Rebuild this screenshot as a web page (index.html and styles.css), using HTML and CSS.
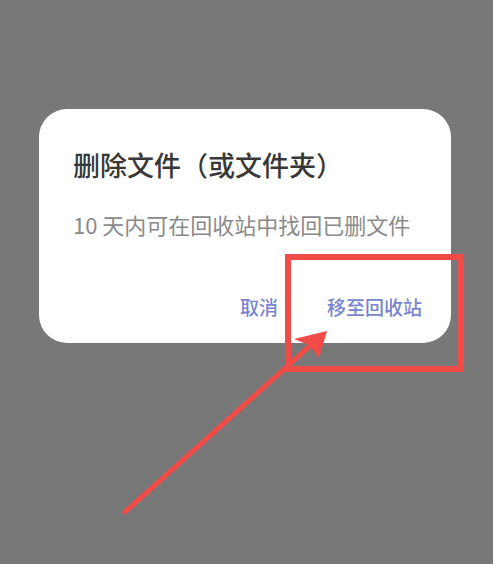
FILE: index.html
```html
<!DOCTYPE html>
<html lang="zh">
<head>
<meta charset="utf-8">
<title>删除文件</title>
<link rel="stylesheet" href="styles.css">
</head>
<body>
<div class="screen">
  <div class="dialog">
    <div class="title">删除文件（或文件夹）</div>
    <div class="message">10 天内可在回收站中找回已删文件</div>
    <div class="actions">
      <span class="btn">取消</span>
      <span class="btn">移至回收站</span>
    </div>
  </div>
  <svg class="annotation" width="493" height="564" viewBox="0 0 493 564">
    <rect x="288" y="257" width="173" height="112" fill="none" stroke="#f04b46" stroke-width="6"/>
    <line x1="125" y1="512" x2="312" y2="344" stroke="#f04b46" stroke-width="5" stroke-linecap="round"/>
    <polygon points="327,331 294,339 309,345 319,358" fill="#f04b46"/>
  </svg>
</div>
</body>
</html>
```
FILE: styles.css
```css
html, body {
  margin: 0;
  padding: 0;
  background: #787878;
}
.screen {
  position: relative;
  width: 493px;
  height: 564px;
  overflow: hidden;
  padding-top: 109px;
  box-sizing: border-box;
  font-family: "Noto Sans CJK SC", "Noto Sans", sans-serif;
}
.dialog {
  margin-left: 39px;
  width: 412px;
  height: 234px;
  box-sizing: border-box;
  background: #ffffff;
  border-radius: 28px;
  padding: 38px 29px 0 34px;
  display: flex;
  flex-direction: column;
}
.title {
  font-size: 27px;
  line-height: 36px;
  font-weight: 500;
  color: #383838;
}
.message {
  margin-top: 26px;
  font-size: 22px;
  line-height: 30px;
  color: #8a8a8a;
}
.actions {
  margin-top: 55px;
  display: flex;
  justify-content: flex-end;
  gap: 49px;
}
.btn {
  font-size: 19px;
  line-height: 26px;
  color: #7a85cf;
  font-weight: 500;
}
.annotation {
  position: absolute;
  left: 0;
  top: 0;
  pointer-events: none;
}
```
